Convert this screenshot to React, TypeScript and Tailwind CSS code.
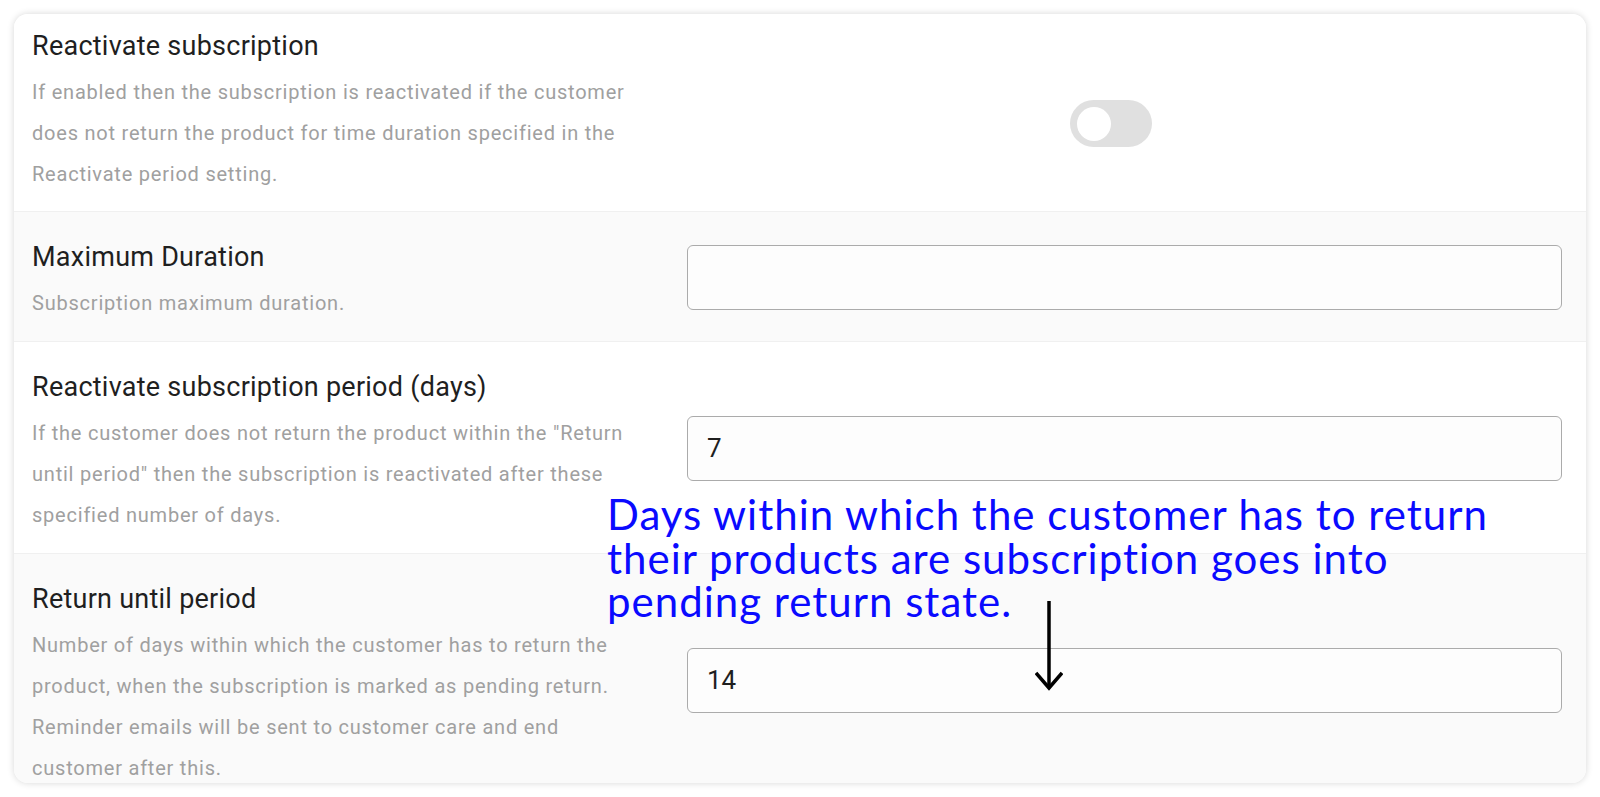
import React from 'react';

type Setting = {
  title: string;
  lines: string[];
  kind: 'toggle' | 'input';
  value?: string;
  shaded: boolean;
  first?: boolean;
};

const settings: Setting[] = [
  {
    title: 'Reactivate subscription',
    lines: [
      'If enabled then the subscription is reactivated if the customer',
      'does not return the product for time duration specified in the',
      'Reactivate period setting.',
    ],
    kind: 'toggle',
    shaded: false,
    first: true,
  },
  {
    title: 'Maximum Duration',
    lines: ['Subscription maximum duration.'],
    kind: 'input',
    value: '',
    shaded: true,
  },
  {
    title: 'Reactivate subscription period (days)',
    lines: [
      'If the customer does not return the product within the "Return',
      'until period" then the subscription is reactivated after these',
      'specified number of days.',
    ],
    kind: 'input',
    value: '7',
    shaded: false,
  },
  {
    title: 'Return until period',
    lines: [
      'Number of days within which the customer has to return the',
      'product, when the subscription is marked as pending return.',
      'Reminder emails will be sent to customer care and end',
      'customer after this.',
    ],
    kind: 'input',
    value: '14',
    shaded: true,
  },
];

const Toggle = () => (
  <div className="flex h-[47px] w-[82px] items-center rounded-full bg-[#e0e0e0] pl-[7px]">
    <div className="h-[34px] w-[34px] rounded-full bg-white" />
  </div>
);

const SettingRow = ({ s }: { s: Setting }) => (
  <div
    className={`flex border-b border-[#f0f0f0] pl-[18px] pr-[24px] ${
      s.first ? 'pt-[16px] pb-[16px]' : 'pt-[29px] pb-[17px]'
    } ${s.kind === 'toggle' ? 'items-start' : 'items-center'} ${
      s.shaded ? 'bg-[#fafafa]' : 'bg-white'
    }`}
  >
    <div className="w-[655px] shrink-0">
      <div className="text-[27px] leading-[32px] tracking-[0.25px] whitespace-nowrap text-[#1f1f1f]">
        {s.title}
      </div>
      <p className="mt-[10px] text-[20px] leading-[41px] tracking-[0.78px] whitespace-nowrap text-[#a0a0a0]">
        {s.lines.map((line, i) => (
          <React.Fragment key={i}>
            {line}
            {i < s.lines.length - 1 && <br />}
          </React.Fragment>
        ))}
      </p>
    </div>
    {s.kind === 'toggle' ? (
      <div className="ml-[383px] mt-[70px]">
        <Toggle />
      </div>
    ) : (
      <div className="mb-[11px] flex-1">
        <div className="flex h-[65px] items-center rounded-[6px] border-[1.5px] border-[#ababab] bg-[#fdfdfd] pl-[19px] text-[26px] text-[#1f1f1f]">
          {s.value}
        </div>
      </div>
    )}
  </div>
);

export default function App() {
  return (
    <div
      className="relative h-[797px] w-[1600px] bg-white p-[14px]"
      style={{ fontFamily: 'Roboto, "Liberation Sans", sans-serif' }}
    >
      <div className="h-[769px] w-full overflow-hidden rounded-[14px] bg-white shadow-[0_0_7px_rgba(0,0,0,0.16)]">
        {settings.map((s) => (
          <SettingRow key={s.title} s={s} />
        ))}
      </div>

      {/* annotation over the form */}
      <div
        className="absolute left-[607px] top-[493px] text-[42px] leading-[43.5px] tracking-[1px] whitespace-nowrap text-[#0a0aff]"
        style={{ fontFamily: 'Lato, "Noto Sans", sans-serif' }}
      >
        Days within which the customer has to return
        <br />
        their products are subscription goes into
        <br />
        pending return state.
      </div>

      <svg
        className="absolute left-[1035px] top-[600px]"
        width="28"
        height="92"
        viewBox="0 0 28 92"
      >
        <path d="M14 1 V88" stroke="#000" strokeWidth="3.5" fill="none" />
        <path
          d="M1 73 L14 88 L27 73"
          stroke="#000"
          strokeWidth="3.5"
          fill="none"
        />
      </svg>
    </div>
  );
}
